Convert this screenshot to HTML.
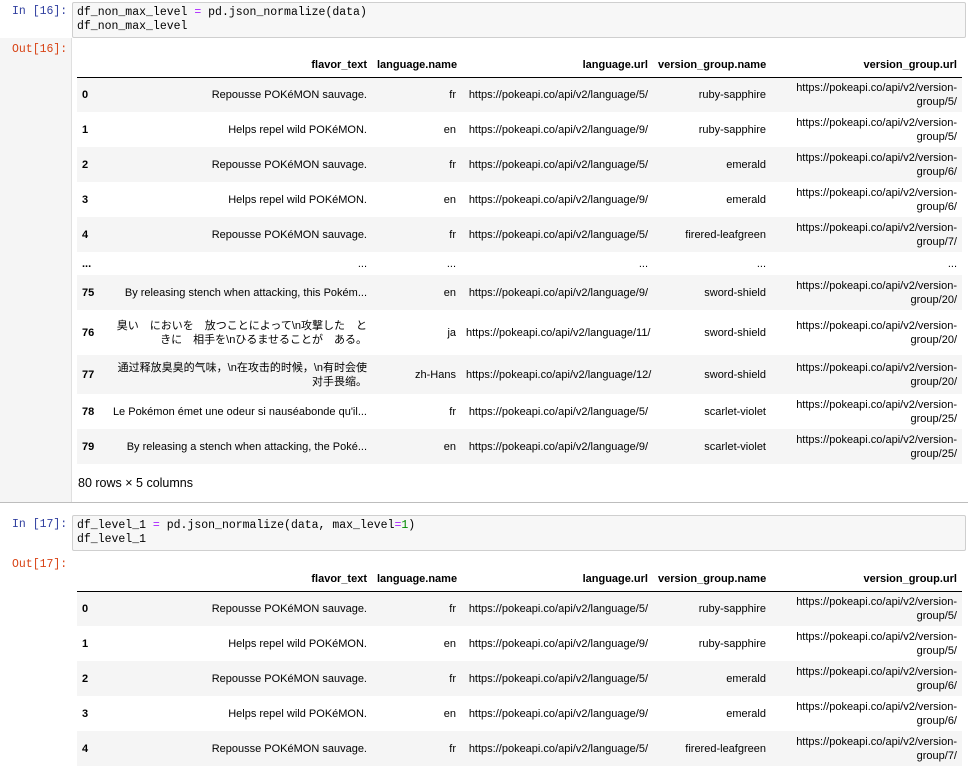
<!DOCTYPE html>
<html><head><meta charset="utf-8"><style>
*{box-sizing:border-box}
body{margin:0;width:968px;height:758px;overflow:hidden;background:#fff;font-family:"Liberation Sans",Arial,sans-serif;position:relative}
.abs{position:absolute}
.inp{position:absolute;left:72px;width:894px;background:#f7f7f7;border:1px solid #cfcfcf;border-radius:2px;font-family:"Liberation Mono",monospace;font-size:11.5px;line-height:14px;padding:3px 4px;white-space:pre;color:#000}
.pin{position:absolute;left:12px;font-family:"Liberation Mono",monospace;font-size:11.5px;color:#303f9f}
.pout{position:absolute;left:12px;font-family:"Liberation Mono",monospace;font-size:11.5px;color:#d84315}
.op{color:#aa22ff}.num{color:#008800}
table{position:absolute;left:77px;width:885px;border-collapse:collapse;font-size:11px;table-layout:fixed;color:#000}
td,th{text-align:right;padding:0 5px;vertical-align:middle;line-height:14px;white-space:nowrap}
td:last-child{white-space:normal}
th{font-weight:bold}
thead tr{height:22px;border-bottom:1px solid #000}
thead th{vertical-align:bottom;padding-bottom:5px}
tbody th{text-align:left}
tbody tr:nth-child(odd){background:#f5f5f5}
tr.r{height:35px}
td.cjk{font-family:"Liberation Sans","Noto Sans CJK JP",sans-serif;white-space:normal;font-size:11px}
</style></head><body>
<div class="abs" style="left:0;top:38px;width:72px;height:464px;background:#f5f5f5;border-right:1px solid #e0e0e0"></div>
<div class="pin" style="top:5px">In [16]:</div>
<div class="inp" style="top:2px;height:36px">df_non_max_level <span class="op">=</span> pd.json_normalize(data)
df_non_max_level</div>
<div class="pout" style="top:43px">Out[16]:</div>
<table style="top:55px">
<colgroup><col style="width:28px"><col style="width:267px"><col style="width:89px"><col style="width:192px"><col style="width:118px"><col style="width:191px"></colgroup>
<thead><tr><th></th><th>flavor_text</th><th>language.name</th><th>language.url</th><th>version_group.name</th><th>version_group.url</th></tr></thead>
<tbody>
<tr class="r"><th>0</th><td>Repousse POKéMON sauvage.</td><td>fr</td><td>https://pokeapi.co/api/v2/language/5/</td><td>ruby-sapphire</td><td>https://pokeapi.co/api/v2/version-group/5/</td></tr>
<tr class="r"><th>1</th><td>Helps repel wild POKéMON.</td><td>en</td><td>https://pokeapi.co/api/v2/language/9/</td><td>ruby-sapphire</td><td>https://pokeapi.co/api/v2/version-group/5/</td></tr>
<tr class="r"><th>2</th><td>Repousse POKéMON sauvage.</td><td>fr</td><td>https://pokeapi.co/api/v2/language/5/</td><td>emerald</td><td>https://pokeapi.co/api/v2/version-group/6/</td></tr>
<tr class="r"><th>3</th><td>Helps repel wild POKéMON.</td><td>en</td><td>https://pokeapi.co/api/v2/language/9/</td><td>emerald</td><td>https://pokeapi.co/api/v2/version-group/6/</td></tr>
<tr class="r"><th>4</th><td>Repousse POKéMON sauvage.</td><td>fr</td><td>https://pokeapi.co/api/v2/language/5/</td><td>firered-leafgreen</td><td>https://pokeapi.co/api/v2/version-group/7/</td></tr>
<tr style="height:23px;background:#fff"><th>...</th><td>...</td><td>...</td><td>...</td><td>...</td><td>...</td></tr>
<tr class="r" style="background:#f5f5f5"><th>75</th><td>By releasing stench when attacking, this Pokém...</td><td>en</td><td>https://pokeapi.co/api/v2/language/9/</td><td>sword-shield</td><td>https://pokeapi.co/api/v2/version-group/20/</td></tr>
<tr style="height:45px;background:#fff"><th>76</th><td class="cjk">臭い　においを　放つことによって\n攻撃した　ときに　相手を\nひるませることが　ある。</td><td>ja</td><td>https://pokeapi.co/api/v2/language/11/</td><td>sword-shield</td><td>https://pokeapi.co/api/v2/version-group/20/</td></tr>
<tr style="height:39px;background:#f5f5f5"><th>77</th><td class="cjk">通过释放臭臭的气味，\n在攻击的时候，\n有时会使对手畏缩。</td><td>zh-Hans</td><td>https://pokeapi.co/api/v2/language/12/</td><td>sword-shield</td><td>https://pokeapi.co/api/v2/version-group/20/</td></tr>
<tr class="r" style="background:#fff"><th>78</th><td>Le Pokémon émet une odeur si nauséabonde qu'il...</td><td>fr</td><td>https://pokeapi.co/api/v2/language/5/</td><td>scarlet-violet</td><td>https://pokeapi.co/api/v2/version-group/25/</td></tr>
<tr class="r" style="background:#f5f5f5"><th>79</th><td>By releasing a stench when attacking, the Poké...</td><td>en</td><td>https://pokeapi.co/api/v2/language/9/</td><td>scarlet-violet</td><td>https://pokeapi.co/api/v2/version-group/25/</td></tr>
</tbody></table>
<div class="abs" style="left:78px;top:476px;font-size:12.5px">80 rows × 5 columns</div>
<div class="abs" style="left:0;top:502px;width:968px;height:1px;background:#bdbdbd"></div>
<div class="pin" style="top:518px">In [17]:</div>
<div class="inp" style="top:515px;height:36px">df_level_1 <span class="op">=</span> pd.json_normalize(data, max_level<span class="op">=</span><span class="num">1</span>)
df_level_1</div>
<div class="pout" style="top:558px">Out[17]:</div>
<table style="top:569px">
<colgroup><col style="width:28px"><col style="width:267px"><col style="width:89px"><col style="width:192px"><col style="width:118px"><col style="width:191px"></colgroup>
<thead><tr><th></th><th>flavor_text</th><th>language.name</th><th>language.url</th><th>version_group.name</th><th>version_group.url</th></tr></thead>
<tbody>
<tr class="r"><th>0</th><td>Repousse POKéMON sauvage.</td><td>fr</td><td>https://pokeapi.co/api/v2/language/5/</td><td>ruby-sapphire</td><td>https://pokeapi.co/api/v2/version-group/5/</td></tr>
<tr class="r"><th>1</th><td>Helps repel wild POKéMON.</td><td>en</td><td>https://pokeapi.co/api/v2/language/9/</td><td>ruby-sapphire</td><td>https://pokeapi.co/api/v2/version-group/5/</td></tr>
<tr class="r"><th>2</th><td>Repousse POKéMON sauvage.</td><td>fr</td><td>https://pokeapi.co/api/v2/language/5/</td><td>emerald</td><td>https://pokeapi.co/api/v2/version-group/6/</td></tr>
<tr class="r"><th>3</th><td>Helps repel wild POKéMON.</td><td>en</td><td>https://pokeapi.co/api/v2/language/9/</td><td>emerald</td><td>https://pokeapi.co/api/v2/version-group/6/</td></tr>
<tr class="r"><th>4</th><td>Repousse POKéMON sauvage.</td><td>fr</td><td>https://pokeapi.co/api/v2/language/5/</td><td>firered-leafgreen</td><td>https://pokeapi.co/api/v2/version-group/7/</td></tr>
</tbody></table>
</body></html>
